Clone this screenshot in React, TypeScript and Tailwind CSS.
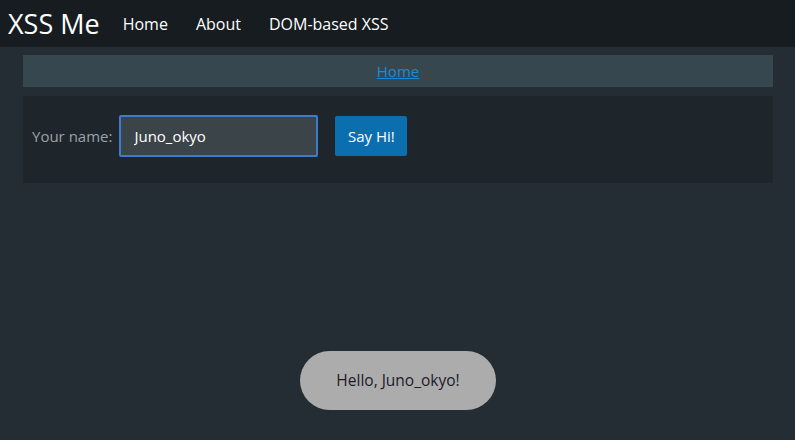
import React, { useState } from 'react';

const App: React.FC = () => {
  const [name, setName] = useState('Juno_okyo');

  return (
    <div className="min-h-screen h-[440px] bg-[#232d33] font-['Open_Sans','Noto_Sans',sans-serif] relative overflow-hidden">
      <nav className="h-[47px] bg-[#161c20] flex items-center pl-[8px]">
        <a href="#" className="text-white text-[27px] leading-none mr-[23px]">XSS Me</a>
        <ul className="flex items-center gap-[28px] text-white text-[16px]">
          <li><a href="#">Home</a></li>
          <li><a href="#">About</a></li>
          <li><a href="#">DOM-based XSS</a></li>
        </ul>
      </nav>

      <div className="px-[23px] pr-[22px]">
        <div className="mt-[8px] h-[32px] bg-[#37474f] flex items-center justify-center">
          <a href="#" className="text-[#1a8ad8] underline text-[15px]">Home</a>
        </div>

        <div className="mt-[9px] bg-[#1e252b] flex items-center pl-[9px] pt-[19px] pb-[26px]">
          <label className="text-[#9aa3a8] text-[15px] mr-[7px]">Your name:</label>
          <input
            value={name}
            onChange={e => setName(e.target.value)}
            className="w-[199px] h-[42px] bg-[#3a4449] border-2 border-[#3d7ccc] rounded-[2px] px-[13px] text-white text-[15px] outline-none"
          />
          <button className="ml-[17px] w-[72px] h-[40px] bg-[#0a6eaf] text-white text-[15px] rounded-[2px]">
            Say Hi!
          </button>
        </div>
      </div>

      <div className="absolute left-[300px] top-[351px] w-[196px] h-[59px] rounded-full bg-[#acacac] flex items-center justify-center text-[#1c1a2a] text-[15.5px]">
        Hello, {name}!
      </div>
    </div>
  );
};

export default App;
